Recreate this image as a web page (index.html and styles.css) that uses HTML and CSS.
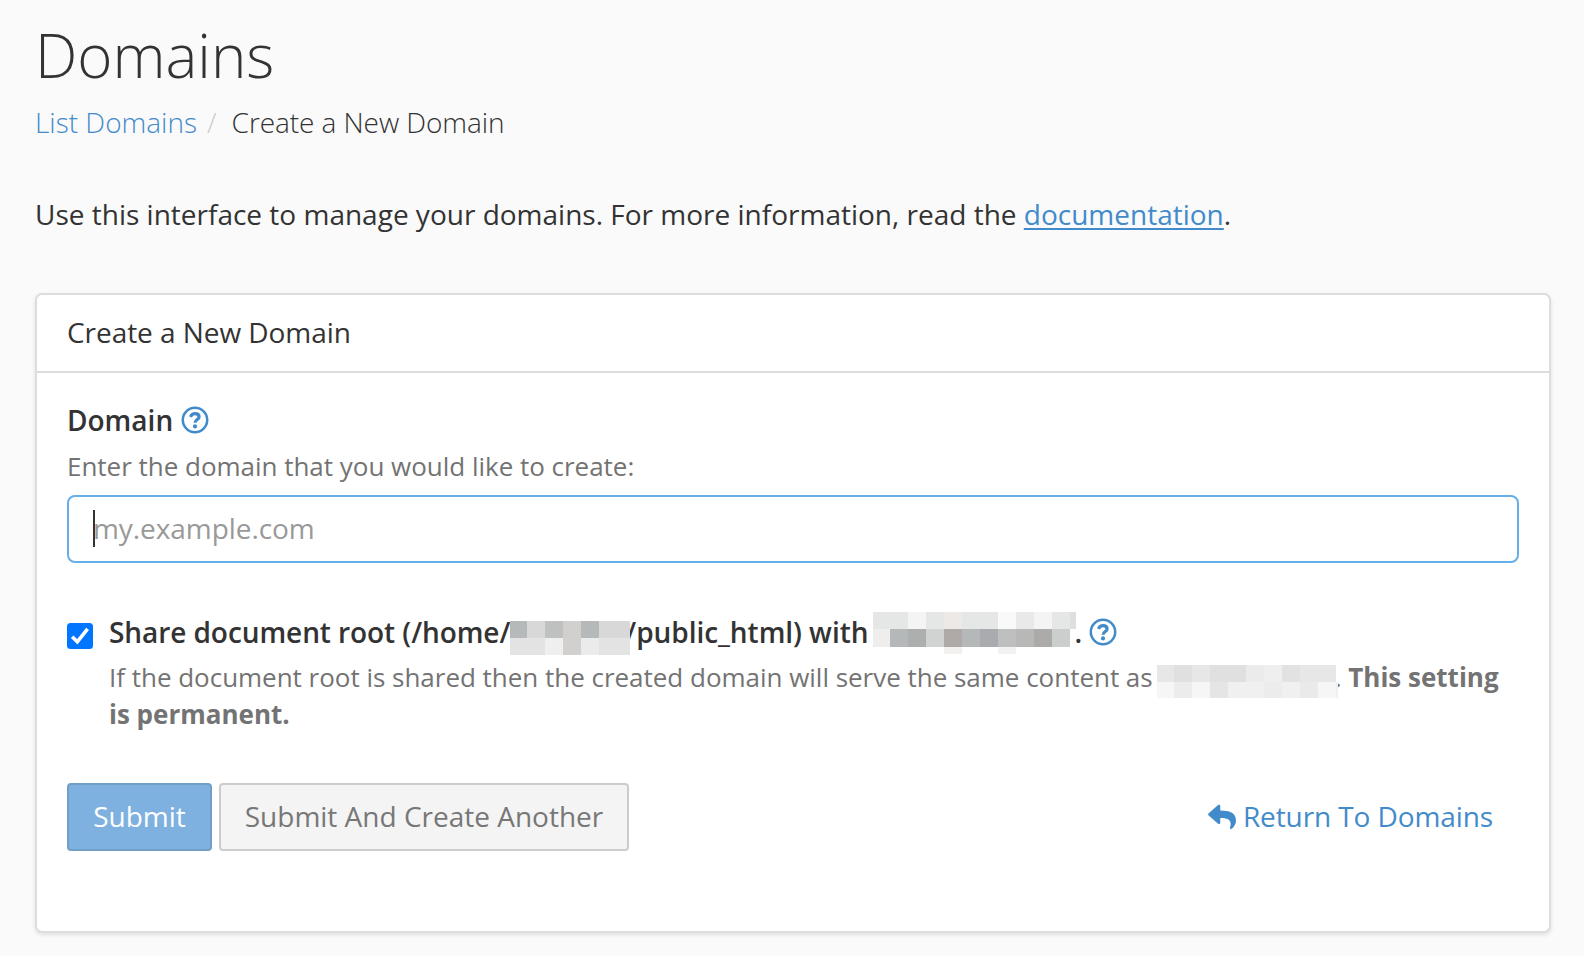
FILE: index.html
```html
<!DOCTYPE html>
<html lang="en">
<head>
<meta charset="utf-8">
<title>Domains</title>
<link rel="stylesheet" href="styles.css">
</head>
<body>
<main class="page">
  <h1 class="title">Domains</h1>
  <nav class="breadcrumb"><a href="#">List Domains</a><span class="sep">/</span><span class="current">Create a New Domain</span></nav>
  <p class="intro">Use this interface to manage your domains. For more information, read the <a href="#">documentation</a>.</p>
  <section class="panel">
    <header class="panel-head"><span>Create a New Domain</span></header>
    <form class="panel-body">
      <div class="label-row">
        <label class="label" for="domain">Domain</label>
        <svg class="help-icon" viewBox="0 0 28 28"><circle cx="14" cy="14" r="12.2" fill="none" stroke="#428bca" stroke-width="2.5"/><path d="M9.4 10.9C10.4 8.6 11.9 7.6 14 7.6C16.6 7.6 18.1 9 18.1 10.9C18.1 13.6 14.2 13.6 14.1 16.8" fill="none" stroke="#428bca" stroke-width="3.2"/><circle cx="14" cy="20.4" r="2.1" fill="#428bca"/></svg>
      </div>
      <p class="help">Enter the domain that you would like to create:</p>
      <div class="field"><span class="caret"></span><input id="domain" class="input" type="text" placeholder="my.example.com"></div>
      <div class="check-row">
        <svg class="checkbox" viewBox="0 0 26 26"><rect width="26" height="26" rx="3.5" fill="#0075ff"/><path d="M5.2 13.8L10.3 18.8L20.6 5.8" fill="none" stroke="#fff" stroke-width="3.6"/></svg>
        <div class="check-text">
          <div class="share"><span class="root">Share document root (/home/</span><svg class="mosaic m1" viewBox="0 0 120 34" shape-rendering="crispEdges"><path fill="#d8d8d8" d="M0 0h120v17H0z"/><path fill="#e3e3e3" d="M0 17h120v17H0z"/><path fill="#b6b9ba" d="M0 0h17v17H0zM71 0h18v17H71z"/><path fill="#bfc1c1" d="M35 0h18v17H35z"/><path fill="#d1d0ce" d="M53 0h18v34H53z"/><path fill="#efefef" d="M35 17h18v17H35z"/><path fill="#ebebeb" d="M71 17h18v17H71z"/></svg><span class="public">/public_html) with</span><svg class="mosaic m2" viewBox="0 0 203 42" shape-rendering="crispEdges"><path fill="#e5e6e6" d="M0 0h203v17H0z"/><path fill="#f4f4f4" d="M35 0h18v17H35zM161 0h18v17H161z"/><path fill="#f9f9f9" d="M125 0h18v17H125z"/><path fill="#ece9e7" d="M71 0h18v17H71z"/><path fill="#e9e9e9" d="M143 0h18v17H143z"/><path fill="#dedede" d="M197 0h6v17H197z"/><path fill="#efeeed" d="M0 17h17v18H0z"/><path fill="#b5b8b8" d="M17 17h18v18H17zM89 17h18v18H89z"/><path fill="#acafae" d="M35 17h18v18H35z"/><path fill="#d1d3d3" d="M53 17h18v18H53z"/><path fill="#afaaa8" d="M71 17h18v18H71z"/><path fill="#a9abae" d="M107 17h18v18H107z"/><path fill="#bec0c0" d="M125 17h18v18H125z"/><path fill="#b8b8b6" d="M143 17h18v18H143z"/><path fill="#adaba9" d="M161 17h18v18H161z"/><path fill="#cbcecd" d="M179 17h18v18H179z"/><path fill="#f3f1f0" d="M71 35h18v7H71z"/><path fill="#f2f2f1" d="M125 35h18v7H125z"/></svg><span class="stop">.</span><svg class="help-icon share-help" viewBox="0 0 28 28"><circle cx="14" cy="14" r="12.2" fill="none" stroke="#428bca" stroke-width="2.5"/><path d="M9.4 10.9C10.4 8.6 11.9 7.6 14 7.6C16.6 7.6 18.1 9 18.1 10.9C18.1 13.6 14.2 13.6 14.1 16.8" fill="none" stroke="#428bca" stroke-width="3.2"/><circle cx="14" cy="20.4" r="2.1" fill="#428bca"/></svg></div>
          <p class="note"><span class="note-text">If the document root is shared then the created domain will serve the same content as</span><svg class="mosaic m3" viewBox="0 0 181 33" shape-rendering="crispEdges"><path fill="#e7e7e7" d="M0 0h179v17H0z"/><path fill="#e0e0e0" d="M17 0h18v17H17zM53 0h36v17H53z"/><path fill="#efefef" d="M107 0h18v17H107z"/><path fill="#ebebeb" d="M89 0h18v17H89z"/><path fill="#e2e2e2" d="M125 0h18v17H125z"/><path fill="#f0f0f0" d="M0 17h181v16H0z"/><path fill="#f6f6f6" d="M0 17h17v16H0zM35 17h18v16H35zM161 17h18v16H161z"/><path fill="#ececec" d="M17 17h18v16H17zM107 17h18v16H107z"/><path fill="#e5e5e5" d="M53 17h18v16H53z"/><path fill="#eaeaea" d="M143 17h18v16H143z"/></svg><span class="note-stop">.</span> <strong>This setting is permanent.</strong></p>
        </div>
      </div>
      <div class="actions">
        <button class="btn primary" type="button">Submit</button>
        <button class="btn secondary" type="button">Submit And Create Another</button>
        <a class="return" href="#"><svg class="reply" viewBox="0 0 512 512"><path fill="#428bca" d="M8.309 189.836L184.313 37.851C199.719 24.546 224 35.347 224 56.015v80.053c160.629 1.839 288 34.032 288 186.258 0 61.441-39.581 122.309-83.333 154.132-13.653 9.931-33.111-2.533-28.077-18.631 45.344-145.012-21.507-183.51-176.59-185.742V360c0 20.7-24.3 31.453-39.687 18.164l-176.004-152c-11.071-9.562-11.086-26.753 0-36.328z"/></svg><span class="return-text">Return To Domains</span></a>
      </div>
    </form>
  </section>
</main>
</body>
</html>
```
FILE: styles.css
```css
* { box-sizing: border-box; }
body {
  margin: 0;
  background: #fafafa;
  color: #333;
  font: 28px/40px "Open Sans", "Noto Sans", sans-serif;
}
a { color: #428bca; text-decoration: none; }
h1, p { margin: 0; }
.page { height: 956px; padding: 20px 33px 0 35px; overflow: hidden; white-space: nowrap; }
.title { font-size: 60px; line-height: 70px; font-weight: 300; }
.breadcrumb { margin-top: 12px; font-weight: 300; }
.sep { color: #ccc; padding: 0 15px 0 10px; }
.current { letter-spacing: -.08px; }
.intro { margin-top: 52px; }
.intro a { text-decoration: underline; text-decoration-thickness: 2px; text-underline-offset: 3px; }
.panel {
  margin-top: 59px;
  height: 640px;
  background: #fff;
  border: 2px solid #ddd;
  border-radius: 7px;
  box-shadow: 0 2px 4px rgba(0, 0, 0, .1);
}
.panel-head { height: 78px; padding: 17px 30px 0; border-bottom: 2px solid #ddd; letter-spacing: -.05px; }
.panel-body { padding: 27px 30px 0; }
.label-row { display: flex; align-items: center; gap: 8px; height: 40px; }
.label, .share { font-weight: 600; }
.help-icon { width: 28px; height: 28px; flex: none; }
.help { margin-top: 8px; font-size: 26px; line-height: 37px; letter-spacing: -.02px; color: #737373; }
.field { position: relative; margin-top: 10px; height: 68px; }
.input {
  display: block;
  width: 100%;
  height: 68px;
  padding: 0 24px 2px;
  border: 2px solid #66afe9;
  border-radius: 8px;
  font: inherit;
  letter-spacing: -.07px;
  background: #fff;
  outline: none;
}
.input::placeholder { color: #999; opacity: 1; }
.caret { position: absolute; left: 26px; top: 15px; width: 2px; height: 37px; background: #333; }
.check-row { display: flex; gap: 16px; margin-top: 49px; }
.checkbox { width: 26px; height: 26px; margin-top: 11px; flex: none; }
.mosaic { display: inline-block; vertical-align: top; position: relative; }
.m1 { width: 120px; height: 34px; margin: 9px -5px -3px 0; }
.m2 { width: 203px; height: 42px; margin: 0 -2px -2px 5px; }
.m3 { width: 181px; height: 33px; margin: 6px -3px -2px 4px; }
.root { letter-spacing: -.07px; }
.public { letter-spacing: -.05px; }
.share { height: 40px; }
.share-help { display: inline-block; vertical-align: top; margin: 6px 0 0 7px; }
.note { width: 1410px; margin-top: 7px; font-size: 26px; line-height: 37px; color: #737373; white-space: normal; }
.note-text { letter-spacing: -.02px; }
.actions { display: flex; align-items: center; margin-top: 50px; }
.btn { height: 68px; padding: 0 0 2px; border: 2px solid; border-radius: 4px; font: inherit; }
.primary { width: 145px; margin-right: 7px; color: #fff; background: #7eb1df; border-color: #719fc8; }
.secondary { width: 410px; color: #777; background: #f4f4f4; border-color: #ccc; }
.return { display: flex; align-items: center; gap: 7px; margin-left: auto; padding-right: 26px; }
.return-text { padding-bottom: 2px; letter-spacing: -.1px; }
.reply { width: 28px; height: 28px; }
```
